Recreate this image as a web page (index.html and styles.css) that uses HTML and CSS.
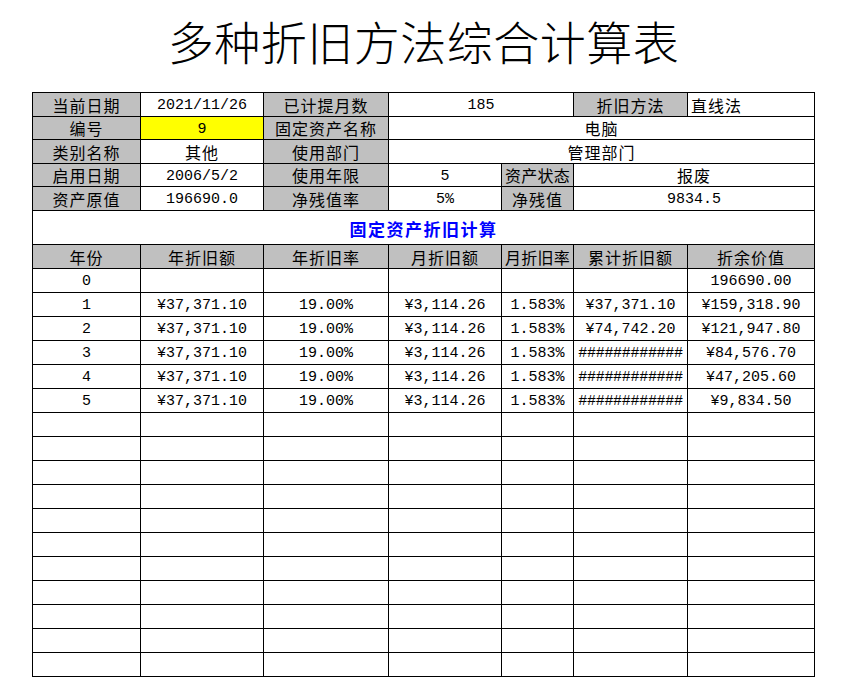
FILE: index.html
```html
<!DOCTYPE html>
<html lang="zh-CN">
<head>
<meta charset="utf-8">
<title>多种折旧方法综合计算表</title>
<link rel="stylesheet" href="styles.css">
</head>
<body>
<div class="sheet">
  <h1 class="title">多种折旧方法综合计算表</h1>
  <table class="grid">
    <colgroup>
      <col class="w1"><col class="w2"><col class="w3"><col class="w4"><col class="w5"><col class="w6"><col class="w7">
    </colgroup>
    <tbody>
      <tr class="r24">
        <td class="lbl">当前日期</td><td class="num">2021/11/26</td><td class="lbl">已计提月数</td><td class="num" colspan="2">185</td><td class="lbl">折旧方法</td><td class="cjk left">直线法</td>
      </tr>
      <tr class="r23">
        <td class="lbl">编号</td><td class="num yellow">9</td><td class="lbl">固定资产名称</td><td class="cjk" colspan="4">电脑</td>
      </tr>
      <tr class="r24">
        <td class="lbl">类别名称</td><td class="cjk">其他</td><td class="lbl">使用部门</td><td class="cjk" colspan="4">管理部门</td>
      </tr>
      <tr class="r23">
        <td class="lbl">启用日期</td><td class="num">2006/5/2</td><td class="lbl">使用年限</td><td class="num">5</td><td class="lbl tight">资产状态</td><td class="cjk" colspan="2">报废</td>
      </tr>
      <tr class="r24">
        <td class="lbl">资产原值</td><td class="num">196690.0</td><td class="lbl">净残值率</td><td class="num">5%</td><td class="lbl">净残值</td><td class="num" colspan="2">9834.5</td>
      </tr>
      <tr class="r34">
        <td class="section" colspan="7">固定资产折旧计算</td>
      </tr>
      <tr class="r24">
        <td class="lbl">年份</td><td class="lbl">年折旧额</td><td class="lbl">年折旧率</td><td class="lbl">月折旧额</td><td class="lbl tight">月折旧率</td><td class="lbl">累计折旧额</td><td class="lbl">折余价值</td>
      </tr>
      <tr class="r24"><td class="num">0</td><td></td><td></td><td></td><td></td><td></td><td class="num">196690.00</td></tr>
      <tr class="r24"><td class="num">1</td><td class="num">¥37,371.10</td><td class="num">19.00%</td><td class="num">¥3,114.26</td><td class="num">1.583%</td><td class="num">¥37,371.10</td><td class="num">¥159,318.90</td></tr>
      <tr class="r24"><td class="num">2</td><td class="num">¥37,371.10</td><td class="num">19.00%</td><td class="num">¥3,114.26</td><td class="num">1.583%</td><td class="num">¥74,742.20</td><td class="num">¥121,947.80</td></tr>
      <tr class="r24"><td class="num">3</td><td class="num">¥37,371.10</td><td class="num">19.00%</td><td class="num">¥3,114.26</td><td class="num">1.583%</td><td class="num hash">############</td><td class="num">¥84,576.70</td></tr>
      <tr class="r24"><td class="num">4</td><td class="num">¥37,371.10</td><td class="num">19.00%</td><td class="num">¥3,114.26</td><td class="num">1.583%</td><td class="num hash">############</td><td class="num">¥47,205.60</td></tr>
      <tr class="r24"><td class="num">5</td><td class="num">¥37,371.10</td><td class="num">19.00%</td><td class="num">¥3,114.26</td><td class="num">1.583%</td><td class="num hash">############</td><td class="num">¥9,834.50</td></tr>
      <tr class="r24"><td></td><td></td><td></td><td></td><td></td><td></td><td></td></tr>
      <tr class="r24"><td></td><td></td><td></td><td></td><td></td><td></td><td></td></tr>
      <tr class="r24"><td></td><td></td><td></td><td></td><td></td><td></td><td></td></tr>
      <tr class="r24"><td></td><td></td><td></td><td></td><td></td><td></td><td></td></tr>
      <tr class="r24"><td></td><td></td><td></td><td></td><td></td><td></td><td></td></tr>
      <tr class="r24"><td></td><td></td><td></td><td></td><td></td><td></td><td></td></tr>
      <tr class="r24"><td></td><td></td><td></td><td></td><td></td><td></td><td></td></tr>
      <tr class="r24"><td></td><td></td><td></td><td></td><td></td><td></td><td></td></tr>
      <tr class="r24"><td></td><td></td><td></td><td></td><td></td><td></td><td></td></tr>
      <tr class="r24"><td></td><td></td><td></td><td></td><td></td><td></td><td></td></tr>
      <tr class="r24"><td></td><td></td><td></td><td></td><td></td><td></td><td></td></tr>
    </tbody>
  </table>
</div>
</body>
</html>
```

FILE: styles.css
```css
html, body {
  margin: 0;
  padding: 0;
  background: #ffffff;
}

.sheet {
  padding-left: 32px;
  width: 783px;
}

.title {
  margin: 0;
  height: 92px;
  padding-top: 16px;
  box-sizing: border-box;
  font-family: "Noto Sans CJK SC", sans-serif;
  font-weight: 300;
  font-size: 46px;
  line-height: 48px;
  letter-spacing: 0.5px;
  text-align: center;
  color: #000000;
}

.grid {
  border-collapse: collapse;
  table-layout: fixed;
  width: 783px;
}

.w1 { width: 108px; }
.w2 { width: 123px; }
.w3 { width: 125px; }
.w4 { width: 113px; }
.w5 { width: 72px; }
.w6 { width: 114px; }
.w7 { width: 127px; }

.grid td {
  border: 1px solid #000000;
  padding: 0;
  text-align: center;
  vertical-align: middle;
  white-space: nowrap;
  overflow: hidden;
  line-height: 16px;
  color: #000000;
}

.r24 { height: 24px; }
.r23 { height: 23px; }
.r34 { height: 34px; }

.lbl, .cjk {
  font-family: "Noto Sans CJK SC", sans-serif;
  font-size: 16px;
  letter-spacing: 1px;
}

.lbl {
  background: #c0c0c0;
}

.tight {
  letter-spacing: 0.2px;
}

.grid td.num {
  font-family: "Liberation Mono", "Noto Sans CJK SC", monospace;
  font-size: 15px;
  padding-top: 3px;
}

.hash {
  letter-spacing: -0.3px;
}

.grid td.left {
  text-align: left;
  padding-left: 3px;
}

.yellow {
  background: #ffff00;
}

.grid td.section {
  font-family: "Noto Sans CJK SC", sans-serif;
  font-size: 17px;
  font-weight: bold;
  letter-spacing: 1.5px;
  color: #0000ff;
  padding-top: 3px;
}
```
